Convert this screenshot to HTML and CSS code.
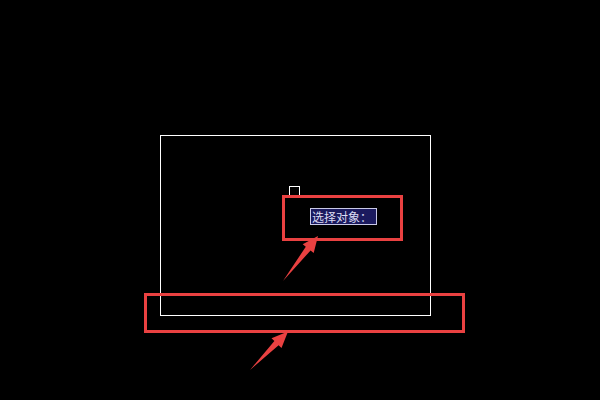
FILE: index.html
```html
<!DOCTYPE html>
<html lang="zh">
<head>
<meta charset="utf-8">
<title>选择对象</title>
<link rel="stylesheet" href="styles.css">
</head>
<body>
<div class="canvas">
  <svg class="drawing" width="600" height="400" viewBox="0 0 600 400">
    <rect x="160.5" y="135.5" width="270" height="180" fill="none" stroke="#ffffff" stroke-width="1"/>
    <rect x="289.5" y="186.5" width="10" height="10" fill="none" stroke="#ffffff" stroke-width="1"/>
    <rect x="283.5" y="196.5" width="118" height="43" fill="none" stroke="#e94141" stroke-width="3"/>
    <rect x="145.5" y="294.5" width="318" height="37" fill="none" stroke="#e94141" stroke-width="3"/>
    <polygon fill="#e94141" points="318,236 313.7,252.9 310.6,250.4 283,281 305.8,246.7 302.7,244.3"/>
    <polygon fill="#e94141" points="288,331.5 281.5,348 278.6,345.2 250,370 274.4,341 271.5,338.2"/>
  </svg>
  <div class="prompt">选择对象：</div>
</div>
</body>
</html>
```
FILE: styles.css
```css
html, body {
  margin: 0;
  padding: 0;
  background: #000000;
}
.canvas {
  position: relative;
  width: 600px;
  height: 400px;
  overflow: hidden;
  background: #000000;
}
.drawing {
  position: absolute;
  left: 0;
  top: 0;
  display: block;
}
.prompt {
  position: absolute;
  left: 310px;
  top: 208px;
  width: 64px;
  height: 15px;
  border: 1px solid #c9c9e6;
  background: #1b1a5e;
  color: #dcdcf2;
  font-family: "Noto Sans CJK SC", "Noto Sans", sans-serif;
  font-size: 12px;
  line-height: 15px;
  padding: 0 0 0 1px;
  box-sizing: content-box;
  white-space: nowrap;
  overflow: hidden;
  letter-spacing: 0;
}
```
